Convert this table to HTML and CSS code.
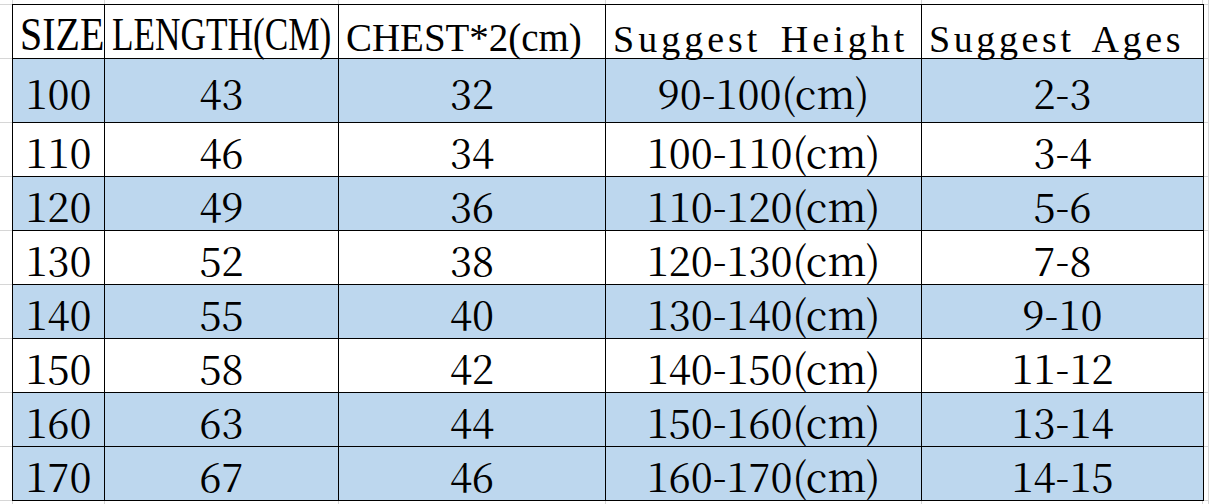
FILE: index.html
```html
<!DOCTYPE html>
<html lang="en">
<head>
<meta charset="utf-8">
<title>Size Chart</title>
<link rel="stylesheet" href="styles.css">
</head>
<body>
<table class="chart">
  <colgroup>
    <col class="c1"><col class="c2"><col class="c3"><col class="c4"><col class="c5">
  </colgroup>
  <thead>
    <tr class="head">
      <th class="h-size"><span class="sq sq-size">SIZE</span></th>
      <th class="h-len"><span class="sq sq-len">LENGTH(CM)</span></th>
      <th class="h-chest"><span class="sq sq-chest">CHEST*2(cm)</span></th>
      <th class="h-height">Suggest Height</th>
      <th class="h-ages">Suggest Ages</th>
    </tr>
  </thead>
  <tbody>
    <tr class="blue first"><td>100</td><td>43</td><td>32</td><td>90-100(cm)</td><td>2-3</td></tr>
    <tr><td>110</td><td>46</td><td>34</td><td>100-110(cm)</td><td>3-4</td></tr>
    <tr class="blue"><td>120</td><td>49</td><td>36</td><td>110-120(cm)</td><td>5-6</td></tr>
    <tr><td>130</td><td>52</td><td>38</td><td>120-130(cm)</td><td>7-8</td></tr>
    <tr class="blue"><td>140</td><td>55</td><td>40</td><td>130-140(cm)</td><td>9-10</td></tr>
    <tr><td>150</td><td>58</td><td>42</td><td>140-150(cm)</td><td>11-12</td></tr>
    <tr class="blue"><td>160</td><td>63</td><td>44</td><td>150-160(cm)</td><td>13-14</td></tr>
    <tr class="blue"><td>170</td><td>67</td><td>46</td><td>160-170(cm)</td><td>14-15</td></tr>
  </tbody>
</table>
</body>
</html>
```

FILE: styles.css
```css
html, body {
  height: 100%;
}

body {
  margin: 0;
  background-color: #ffffff;
  background-image:
    linear-gradient(#d6d6d6, #d6d6d6),
    linear-gradient(#d6d6d6, #d6d6d6),
    linear-gradient(#d6d6d6, #d6d6d6),
    linear-gradient(#d6d6d6, #d6d6d6),
    linear-gradient(#d6d6d6, #d6d6d6),
    linear-gradient(#d6d6d6, #d6d6d6),
    linear-gradient(#d6d6d6, #d6d6d6),
    linear-gradient(#d6d6d6, #d6d6d6),
    linear-gradient(#d6d6d6, #d6d6d6),
    linear-gradient(#d6d6d6, #d6d6d6),
    linear-gradient(#d6d6d6, #d6d6d6),
    linear-gradient(#d6d6d6, #d6d6d6),
    linear-gradient(#d6d6d6, #d6d6d6),
    linear-gradient(#d6d6d6, #d6d6d6),
    linear-gradient(#d6d6d6, #d6d6d6),
    linear-gradient(#d6d6d6, #d6d6d6),
    linear-gradient(#d6d6d6, #d6d6d6);
  background-repeat: no-repeat;
  background-size:
    100% 1px, 100% 1px, 100% 1px, 100% 1px, 100% 1px,
    100% 1px, 100% 1px, 100% 1px, 100% 1px, 100% 1px,
    1px 100%, 1px 100%, 1px 100%, 1px 100%, 1px 100%, 1px 100%, 1px 100%;
  background-position:
    0 4px, 0 58px, 0 122px, 0 176px, 0 230px,
    0 284px, 0 338px, 0 392px, 0 446px, 0 500px,
    12px 0, 104px 0, 338px 0, 605px 0, 921px 0, 1202px 0, 1208px 0;
  color: #000;
  font-family: "Liberation Serif";
}

.chart {
  margin: 4px 0 0 12px;
  border-collapse: collapse;
  table-layout: fixed;
  width: 1191px;
}

.c1 { width: 92px; }
.c2 { width: 234px; }
.c3 { width: 267px; }
.c4 { width: 316px; }
.c5 { width: 282px; }

.chart th,
.chart td {
  border: 1px solid #000;
  padding: 0;
  background: #ffffff;
  white-space: nowrap;
  line-height: 1;
  color: #000;
}

.head {
  height: 54px;
}

.chart th {
  font-family: "Liberation Serif";
  font-weight: normal;
  text-align: left;
  vertical-align: bottom;
  padding-left: 7px;
}

.h-size {
  font-size: 47px;
  padding-left: 8px;
}

.h-len {
  font-size: 47px;
  padding-left: 2px;
}

.h-chest {
  font-size: 41px;
  padding-bottom: 1px;
}

.h-height {
  font-size: 38px;
  letter-spacing: 4px;
  word-spacing: 6px;
  padding-bottom: 2px;
}

.h-ages {
  font-size: 38px;
  letter-spacing: 3.6px;
  word-spacing: 6px;
  padding-bottom: 2px;
}

.sq {
  display: inline-block;
  transform-origin: left bottom;
}

.sq-size { transform: scaleX(0.85); }
.sq-len { transform: scaleX(0.75); }
.sq-chest { transform: scaleX(0.95); }

.chart tbody tr {
  height: 54px;
}

.chart tbody tr.first {
  height: 64px;
}

.chart td {
  font-family: "Noto Serif CJK SC";
  font-size: 40px;
  text-align: center;
  vertical-align: bottom;
  padding-bottom: 5px;
}

.chart tr.first td {
  padding-bottom: 10px;
}

.chart tr.blue td {
  background: #bdd7ee;
}
```
